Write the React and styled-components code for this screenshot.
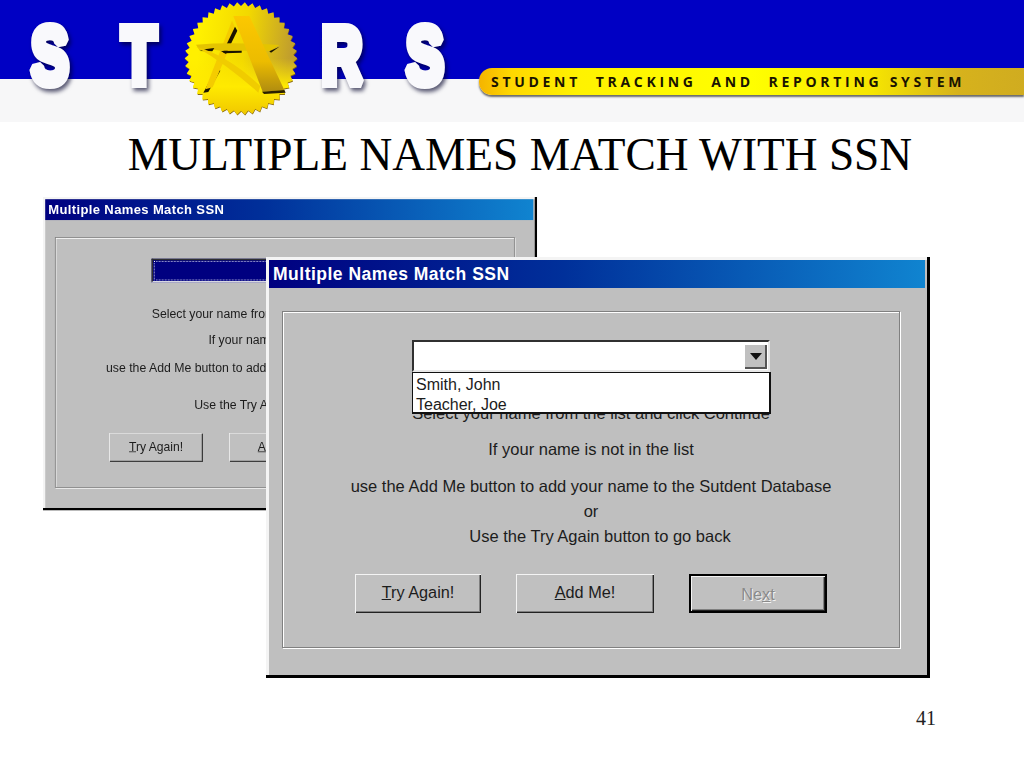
import React from 'react'
import styled, { createGlobalStyle } from 'styled-components'

const GlobalStyle = createGlobalStyle`
  html, body {
    margin: 0;
    background: #fff;
  }
`

// 46 teeth round the seal
const sealPoints = Array.from({ length: 92 }, (_, i) => {
  const r = i % 2 === 0 ? 169 : 157
  const a = (i / 92) * Math.PI * 2
  return `${(210 + r * Math.cos(a)).toFixed(1)},${(175 + r * Math.sin(a)).toFixed(1)}`
}).join(' ')

function Seal() {
  return (
    <SealSvg viewBox="0 0 420 375">
      <defs>
        <linearGradient id="sealFill" x1="0.15" y1="0.2" x2="0.95" y2="0.3">
          <stop offset="0" stopColor="#fff000" />
          <stop offset="0.5" stopColor="#f2d800" />
          <stop offset="1" stopColor="#c2a02c" />
        </linearGradient>
        <linearGradient id="sealLower" x1="0" y1="0" x2="0" y2="1">
          <stop offset="0.5" stopColor="#ffe800" stopOpacity="0" />
          <stop offset="0.75" stopColor="#ffea00" />
          <stop offset="1" stopColor="#f0c800" />
        </linearGradient>
        <linearGradient id="barFill" x1="0" y1="0" x2="0" y2="1">
          <stop offset="0" stopColor="#fcc800" />
          <stop offset="0.6" stopColor="#ecbc00" />
          <stop offset="1" stopColor="#b08c10" />
        </linearGradient>
      </defs>
      <polygon points={sealPoints} fill="#8a6a10" transform="translate(1 3)" />
      <polygon points={sealPoints} fill="url(#sealFill)" />
      <polygon points={sealPoints} fill="url(#sealLower)" />
      <path d="M97 278 L136 205 L148 212 L112 276 Z" fill="#1a1400" />
      <path d="M183 62 L197 92 L125 262 L103 268 Z" fill="#f4cc00" />
      <path d="M199 92 L165 162 L156 155 L192 80 Z" fill="#1a1400" />
      <path d="M75 134 Q180 125 325 135 L298 152 L150 152 Q110 146 85 150 Z" fill="#e4c400" />
      <path d="M85 153 Q105 146 130 144 L124 154 Z" fill="#1a1400" />
      <path d="M150 153 L212 152 L212 158 L160 160 Z" fill="#1a1400" />
      <path d="M295 154 L325 140 L300 158 Z" fill="#1a1400" />
      <path d="M75 140 Q170 165 268 258 L262 278 Q170 195 75 140 Z" fill="#f0cc00" />
      <path d="M187 48 L235 48 L340 270 L275 275 Z" fill="url(#barFill)" />
      <path d="M273 275 L340 270 L344 278 L279 282 Z" fill="#2a2000" />
    </SealSvg>
  )
}

function Letter({ gap, width, join = 'miter', children }) {
  return (
    <LetterSvg $gap={gap} width={width} height="65" viewBox={`0 0 ${width} 65`}>
      <g transform="scale(0.7 1)">
        <LetterText $join={join} x={width / 2 / 0.7} y="60" textAnchor="middle">{children}</LetterText>
      </g>
    </LetterSvg>
  )
}

function Dialog({ x, y, scale, focused, open }) {
  return (
    <Window $x={x} $y={y} $scale={scale}>
      <TitleBar>Multiple Names Match SSN</TitleBar>
      <Frame>
        <Combo>
          <ComboField $focused={focused} />
          <ComboButton>
            <Arrow />
          </ComboButton>
          {open && (
            <DropList>
              <DropItem>Smith, John</DropItem>
              <DropItem>Teacher, Joe</DropItem>
            </DropList>
          )}
        </Combo>
        <Prompt>Select your name from the list and click Continue</Prompt>
        <Prompt $top={12}>If your name is not in the list</Prompt>
        <Prompt $top={13}>use the Add Me button to add your name to the Sutdent Database</Prompt>
        <Prompt $top={1}>or</Prompt>
        <Prompt $top={1} $shift={18}>Use the Try Again button to go back</Prompt>
        <ButtonRow>
          <Button $width={126}><u>T</u>ry Again!</Button>
          <Button $width={138}><u>A</u>dd Me!</Button>
          <Button $width={138} $default>Ne<u>x</u>t</Button>
        </ButtonRow>
      </Frame>
    </Window>
  )
}

export default function App() {
  return (
    <Slide>
      <GlobalStyle />
      <Banner>
        <BannerBlue />
        <BannerPale />
        <LogoRow>
          <Letter gap={0} width={44} join="bevel">S</Letter>
          <Letter gap={48} width={38}>T</Letter>
          <Seal />
          <Letter gap={23} width={44}>R</Letter>
          <Letter gap={39} width={44} join="bevel">S</Letter>
        </LogoRow>
        <Strap>STUDENT&nbsp; TRACKING&nbsp; AND&nbsp; REPORTING SYSTEM</Strap>
      </Banner>
      <Heading>MULTIPLE NAMES MATCH WITH SSN</Heading>
      <Stage>
        <Dialog x={43} y={7} scale={0.744} focused />
        <Dialog x={266} y={67} open />
      </Stage>
      <PageNumber>41</PageNumber>
    </Slide>
  )
}

const Slide = styled.div`
  position: relative;
  width: 1024px;
  height: 768px;
  overflow: hidden;
  background: #fff;
`

const Banner = styled.header`
  position: relative;
  display: flex;
  flex-direction: column;
  height: 122px;
`

const BannerBlue = styled.div`
  height: 79px;
  background: #0000c4;
`

const BannerPale = styled.div`
  flex: 1;
  background: #f7f7f8;
`

const LogoRow = styled.div`
  position: absolute;
  top: 0;
  left: 28px;
  display: flex;
  align-items: flex-start;
`

const LetterSvg = styled.svg`
  flex: none;
  overflow: visible;
  margin-top: 23px;
  margin-left: ${(p) => p.$gap}px;
  filter: drop-shadow(2px 3px 2px rgba(0, 0, 40, 0.65));
`

const LetterText = styled.text`
  font-family: "Liberation Sans", sans-serif;
  font-weight: 700;
  font-size: 80px;
  fill: #f9f9fc;
  stroke: #f9f9fc;
  stroke-width: 10px;
  stroke-linejoin: ${(p) => p.$join};
  stroke-miterlimit: 2;
`

const SealSvg = styled.svg`
  width: 140px;
  height: 125px;
  margin-left: 13px;
  margin-right: -14px;
  flex: none;
`

const Strap = styled.div`
  position: absolute;
  top: 68px;
  left: 479px;
  right: 0;
  height: 27px;
  padding-left: 12px;
  border-radius: 13px 0 0 13px;
  background: linear-gradient(90deg, #f4b400 0%, #ffd800 6%, #fff200 18%, #ffff00 50%, #f6e600 72%, #d6b21c 88%, #d0ac20 100%);
  box-shadow: 0 2px 2px #6a6a6a;
  font-family: "Open Sans", sans-serif;
  font-weight: 700;
  font-size: 14px;
  line-height: 27px;
  letter-spacing: 3.7px;
  white-space: nowrap;
  color: #1a1400;
`

const Heading = styled.h1`
  height: 68px;
  margin: 0;
  padding-left: 16px;
  text-align: center;
  font-family: "Liberation Serif", serif;
  font-weight: 400;
  font-size: 45.4px;
  line-height: 66px;
  color: #000;
`

const Stage = styled.main`
  position: relative;
  height: 520px;
`

const Window = styled.section`
  position: absolute;
  left: ${(p) => p.$x}px;
  top: ${(p) => p.$y}px;
  width: 664px;
  height: 421px;
  box-sizing: border-box;
  padding: 3px 2px 0 3px;
  background: #bfbfbf;
  border-right: 3px solid #000;
  border-bottom: 3px solid #000;
  box-shadow: inset 3px 3px 0 #f4f4f4;
  transform: scale(${(p) => p.$scale || 1});
  transform-origin: top left;
  font-family: "Liberation Sans", sans-serif;
  color: #1c1c1c;
`

const TitleBar = styled.div`
  height: 28px;
  padding-left: 4px;
  background: linear-gradient(90deg, #000080 0%, #00309a 45%, #1084d0 100%);
  font-weight: 700;
  font-size: 17.5px;
  line-height: 28px;
  letter-spacing: 0.5px;
  color: #fff;
`

const Frame = styled.div`
  width: 618px;
  height: 337px;
  box-sizing: border-box;
  margin: 23px 0 0 13px;
  padding-top: 28px;
  display: flex;
  flex-direction: column;
  align-items: center;
  border: 1px solid #808080;
  box-shadow: 1px 1px 0 #fff, inset 1px 1px 0 #fff;
`

const Combo = styled.div`
  position: relative;
  width: 358px;
  height: 32px;
  margin-bottom: 29px;
`

const ComboField = styled.div`
  height: 100%;
  box-sizing: border-box;
  background: ${(p) => (p.$focused ? '#000080' : '#fff')};
  border: 2px solid #303030;
  border-right-color: #e8e8e8;
  border-bottom-color: #e8e8e8;
  outline: ${(p) => (p.$focused ? '1px dotted #fff' : 'none')};
  outline-offset: -4px;
`

const ComboButton = styled.div`
  position: absolute;
  top: 4px;
  right: 3px;
  width: 23px;
  height: 25px;
  display: flex;
  align-items: center;
  justify-content: center;
  background: #c0c0c0;
  box-shadow: inset 1px 1px 0 #fff, inset -2px -2px 0 #555;
`

const Arrow = styled.span`
  width: 0;
  height: 0;
  border-left: 6px solid transparent;
  border-right: 6px solid transparent;
  border-top: 7px solid #111;
`

const DropList = styled.div`
  position: absolute;
  top: 32px;
  left: 0;
  right: -1px;
  height: 42px;
  box-sizing: border-box;
  padding: 2px 3px;
  background: #fff;
  border: 1px solid #111;
  border-right-width: 2px;
  border-bottom-width: 2px;
`

const DropItem = styled.div`
  font-size: 16px;
  line-height: 19.5px;
`

const Prompt = styled.p`
  margin: ${(p) => p.$top || 0}px 0 0;
  padding-left: ${(p) => p.$shift || 0}px;
  font-size: 16.5px;
  line-height: 24px;
  white-space: nowrap;
`

const ButtonRow = styled.div`
  display: flex;
  gap: 35px;
  margin-top: 26px;
`

const Button = styled.div`
  width: ${(p) => p.$width}px;
  height: 39px;
  box-sizing: border-box;
  text-align: center;
  font-size: 16.3px;
  line-height: 37px;
  background: #c0c0c0;
  color: ${(p) => (p.$default ? '#8a8a8a' : '#1c1c1c')};
  text-shadow: ${(p) => (p.$default ? '1px 1px 0 #f4f4f4' : 'none')};
  border: ${(p) => (p.$default ? '2px solid #000' : 'none')};
  box-shadow: inset 1px 1px 0 #f4f4f4, inset -1px -1px 0 #222, inset -2px -2px 0 #808080;
`

const PageNumber = styled.footer`
  padding-right: 88px;
  text-align: right;
  font-family: "Liberation Serif", serif;
  font-size: 20px;
  line-height: 16px;
  color: #222;
`
